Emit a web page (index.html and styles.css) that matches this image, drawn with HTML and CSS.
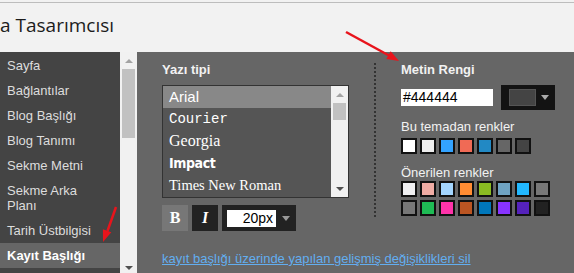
FILE: index.html
```html
<!DOCTYPE html>
<html>
<head>
  <meta charset="utf-8">
  <title>Şablon Tasarımcısı</title>
  <link rel="stylesheet" href="styles.css">
</head>
<body>
  <header class="topbar">
    <h1 class="title">a Tasarımcısı</h1>
  </header>

  <div class="designer">
    <nav class="sidebar">
      <ul class="menu">
        <li>Sayfa</li>
        <li>Bağlantılar</li>
        <li>Blog Başlığı</li>
        <li>Blog Tanımı</li>
        <li>Sekme Metni</li>
        <li>Sekme Arka Planı</li>
        <li>Tarih Üstbilgisi</li>
        <li class="active">Kayıt Başlığı</li>
      </ul>
    </nav>
    <div class="side-scroll">
      <span class="scroll-up"><i class="tri-up"></i></span>
      <span class="side-thumb"></span>
      <span class="scroll-down"><i class="tri-down"></i></span>
    </div>

    <main class="panel">
      <div class="editor">
        <section class="fonts">
          <h2 class="label">Yazı tipi</h2>
          <div class="fontlist">
            <ul class="font-items">
              <li class="f-arial selected">Arial</li>
              <li class="f-courier">Courier</li>
              <li class="f-georgia">Georgia</li>
              <li class="f-impact">Impact</li>
              <li class="f-times">Times New Roman</li>
            </ul>
            <div class="list-scroll">
              <span class="scroll-up"><i class="tri-up"></i></span>
              <span class="list-thumb"></span>
              <span class="scroll-down"><i class="tri-down"></i></span>
            </div>
          </div>
          <div class="styles">
            <button class="style-btn bold">B</button>
            <button class="style-btn italic">I</button>
            <div class="size">
              <span class="size-value">20px</span>
              <i class="caret"></i>
            </div>
          </div>
        </section>

        <div class="divider"></div>

        <section class="colors">
          <h2 class="label">Metin Rengi</h2>
          <div class="color-row">
            <span class="hex">#444444</span>
            <div class="picker">
              <span class="picker-swatch"></span>
              <i class="caret"></i>
            </div>
          </div>
          <h3 class="sublabel">Bu temadan renkler</h3>
          <div class="swatches">
            <span class="swatch" style="background:#ffffff"></span>
            <span class="swatch" style="background:#eeeeee"></span>
            <span class="swatch" style="background:#33a3ff"></span>
            <span class="swatch" style="background:#f06a55"></span>
            <span class="swatch" style="background:#2289c4"></span>
            <span class="swatch" style="background:#666666"></span>
            <span class="swatch" style="background:#444444"></span>
          </div>
          <h3 class="sublabel suggested">Önerilen renkler</h3>
          <div class="swatches">
            <span class="swatch" style="background:#f0f0f2"></span>
            <span class="swatch" style="background:#f0aca4"></span>
            <span class="swatch" style="background:#a4d6ff"></span>
            <span class="swatch" style="background:#ff8c33"></span>
            <span class="swatch" style="background:#8abb22"></span>
            <span class="swatch" style="background:#6fa3c2"></span>
            <span class="swatch" style="background:#22b8ff"></span>
            <span class="swatch" style="background:#777777"></span>
          </div>
          <div class="swatches tight">
            <span class="swatch" style="background:#777777"></span>
            <span class="swatch" style="background:#1fbb55"></span>
            <span class="swatch" style="background:#ff33aa"></span>
            <span class="swatch" style="background:#bb5522"></span>
            <span class="swatch" style="background:#0077bb"></span>
            <span class="swatch" style="background:#8833ff"></span>
            <span class="swatch" style="background:#5522bb"></span>
            <span class="swatch" style="background:#222222"></span>
          </div>
        </section>
      </div>

      <a class="reset" href="#">kayıt başlığı üzerinde yapılan gelişmiş değişiklikleri sil</a>
    </main>
  </div>

  <!-- annotation arrows -->
  <svg class="marks" width="574" height="273" viewBox="0 0 574 273">
    <line x1="346" y1="32" x2="389" y2="55.5" stroke="#e8141c" stroke-width="2.5"/>
    <polygon points="399,61 386.3,59.1 390.7,51.3" fill="#e8141c"/>
    <line x1="116" y1="207" x2="107.5" y2="231" stroke="#e8141c" stroke-width="2.5"/>
    <polygon points="103,242 111.3,232.2 102.9,229.2" fill="#e8141c"/>
  </svg>
</body>
</html>
```

FILE: styles.css
```css
body {
  margin: 0;
  background: #f2f2f2;
  font-family: "Liberation Sans", Arial, sans-serif;
  font-size: 13px;
  overflow: hidden;
}

.topbar {
  margin-top: 2px;
  height: 49px;
  border-top: 1px solid #bdbdbd;
}
.title {
  margin: 0;
  padding-top: 9px;
  font-family: "Open Sans", sans-serif;
  font-weight: normal;
  font-size: 19px;
  line-height: 26px;
  color: #1c1c1c;
}

.designer {
  display: flex;
  height: 221px;
}

/* left menu */
.sidebar {
  width: 120px;
  background: #444;
}
.menu {
  list-style: none;
  margin: 0;
  padding: 1px 0 0;
}
.menu li {
  padding: 5px 14px 5px 7px;
  line-height: 15px;
  color: #ddd;
}
.menu li.active {
  background: #666;
  color: #fff;
  font-weight: bold;
}

.side-scroll,
.list-scroll {
  display: flex;
  flex-direction: column;
  width: 17px;
  background: #f1f1f1;
}
.scroll-up,
.scroll-down {
  display: flex;
  align-items: center;
  justify-content: center;
  height: 17px;
}
.scroll-down {
  margin-top: auto;
}
.side-scroll .scroll-down {
  height: 11px;
}
.tri-up {
  border-left: 4px solid transparent;
  border-right: 4px solid transparent;
  border-bottom: 4px solid #a3a3a3;
}
.tri-down {
  border-left: 4px solid transparent;
  border-right: 4px solid transparent;
  border-top: 4px solid #505050;
}
.side-thumb {
  height: 69px;
  margin: 0 2px;
  background: #c1c1c1;
}
.list-thumb {
  height: 17px;
  margin: 0 2px;
  background: #c1c1c1;
}

/* main panel */
.panel {
  flex: 1;
  background: #666;
  padding: 8px 0 0 25px;
}
.editor {
  display: flex;
}
.fonts {
  width: 212px;
}
.label {
  margin: 2px 0 8px;
  font-size: 13px;
  line-height: 15px;
  color: #f2f2f2;
}

.fontlist {
  display: flex;
  width: 185px;
  height: 111px;
  border: 1px solid #333;
  background: #555;
}
.font-items {
  flex: 1;
  list-style: none;
  margin: 0;
  padding: 0;
}
.font-items li {
  height: 22px;
  line-height: 22px;
  padding-left: 6px;
  color: #fff;
}
.font-items li.selected {
  background: #888;
}
.f-arial {
  font-size: 15px;
}
.f-courier {
  font-family: "Liberation Mono", "Courier New", monospace;
  font-size: 14px;
}
.f-georgia {
  font-family: "Liberation Serif", Georgia, serif;
  font-size: 16px;
}
.f-impact {
  font-family: "DejaVu Sans Condensed", "DejaVu Sans", sans-serif;
  font-weight: bold;
  font-size: 14px;
  letter-spacing: -0.4px;
}
.f-times {
  font-family: "Liberation Serif", "Times New Roman", serif;
  font-size: 14.5px;
}

.styles {
  display: flex;
  gap: 4px;
  margin-top: 7px;
}
.style-btn {
  width: 26px;
  height: 26px;
  padding: 0;
  border: none;
  background: #222;
  color: #fff;
  font-family: "Liberation Serif", serif;
  font-weight: bold;
  font-size: 16px;
}
.style-btn.bold {
  background: #777;
}
.style-btn.italic {
  font-style: italic;
}
.size {
  display: flex;
  align-items: center;
  width: 64px;
  height: 26px;
  padding: 0 5px;
  background: #222;
}
.size-value {
  width: 46px;
  height: 17px;
  padding-right: 3px;
  background: #fff;
  color: #000;
  font-size: 14px;
  line-height: 17px;
  text-align: right;
}
.caret {
  margin-left: 6px;
  border-left: 4px solid transparent;
  border-right: 4px solid transparent;
  border-top: 5px solid #999;
}

.divider {
  width: 2px;
  height: 156px;
  margin-top: 3px;
  background: repeating-linear-gradient(#333 0 2px, transparent 2px 4px);
}

.colors {
  padding-left: 25px;
}
.color-row {
  display: flex;
  align-items: center;
  gap: 8px;
}
.hex {
  width: 90px;
  height: 17px;
  padding-left: 2px;
  background: #fff;
  color: #000;
  font-size: 14px;
  line-height: 17px;
}
.picker {
  display: flex;
  align-items: center;
  width: 46px;
  height: 25px;
  padding-left: 8px;
  background: #131313;
}
.picker-swatch {
  width: 25px;
  height: 15px;
  border: 1px solid #555;
  background: #444;
}
.picker .caret {
  margin-left: 5px;
  border-top-color: #aaa;
}
.sublabel {
  margin: 9px 0 4px;
  font-size: 13px;
  font-weight: normal;
  line-height: 15px;
  color: #f2f2f2;
}
.sublabel.suggested {
  margin: 11px 0 1px;
}
.swatches {
  display: flex;
  gap: 3px;
}
.swatches.tight {
  margin-top: 3px;
}
.swatch {
  width: 16px;
  height: 16px;
  box-sizing: border-box;
  border: 2px solid #111;
}

.reset {
  display: inline-block;
  margin-top: 20px;
  line-height: 15px;
  color: #62aef0;
}

.marks {
  position: absolute;
  top: 0;
  left: 0;
  pointer-events: none;
}
```
